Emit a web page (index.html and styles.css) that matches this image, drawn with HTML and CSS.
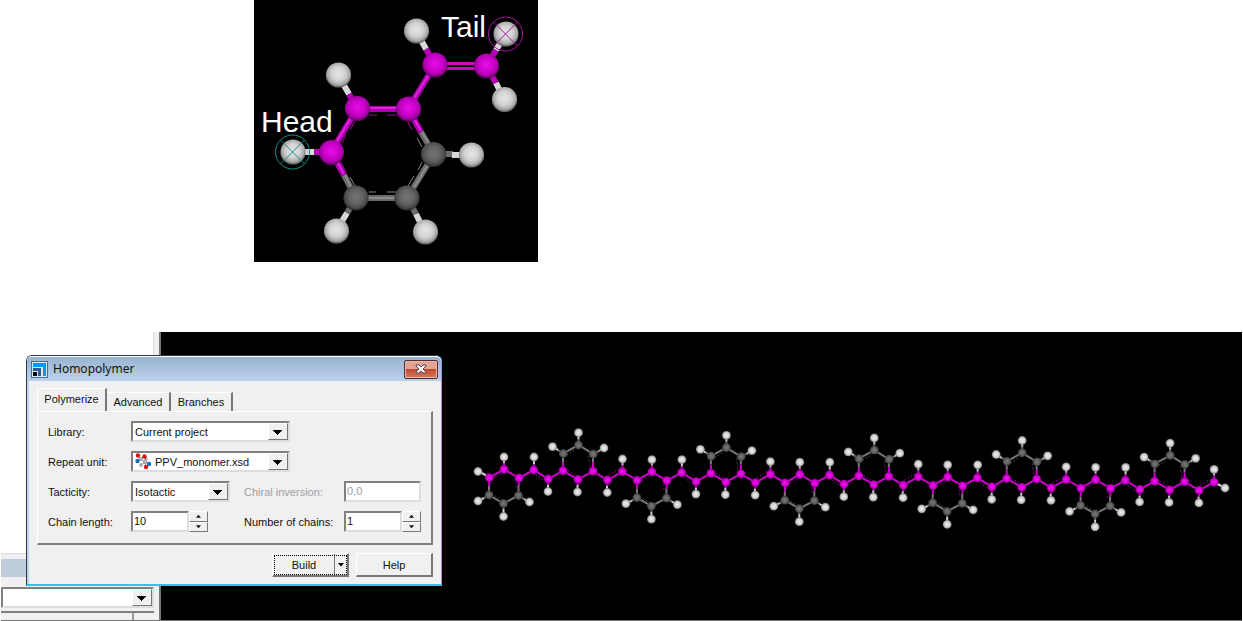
FILE: index.html
```html
<!DOCTYPE html>
<html lang="en">
<head>
<meta charset="utf-8">
<title>Homopolymer builder</title>
<link rel="stylesheet" href="styles.css">
</head>
<body>
<main class="page">
  <svg class="monomer" viewBox="0 0 284 262" width="284" height="262" role="img" aria-label="Monomer with head and tail atoms">
    <defs>
      <radialGradient id="gh" cx=".5" cy=".45" r=".55"><stop offset="0" stop-color="#e6e6e6"/><stop offset=".5" stop-color="#d2d2d2"/><stop offset=".8" stop-color="#a9a9a9"/><stop offset="1" stop-color="#555"/></radialGradient>
      <radialGradient id="gm" cx=".5" cy=".45" r=".55"><stop offset="0" stop-color="#e410e4"/><stop offset=".5" stop-color="#cf00cf"/><stop offset=".8" stop-color="#a600a6"/><stop offset="1" stop-color="#500050"/></radialGradient>
      <radialGradient id="gc" cx=".5" cy=".45" r=".55"><stop offset="0" stop-color="#747474"/><stop offset=".5" stop-color="#646464"/><stop offset=".8" stop-color="#4b4b4b"/><stop offset="1" stop-color="#222"/></radialGradient>
      <circle id="H" r="12.6" fill="url(#gh)"/>
      <circle id="M" r="12.6" fill="url(#gm)"/>
      <circle id="C" r="12.6" fill="url(#gc)"/>
    </defs>
    <rect width="284" height="262" fill="#000"/>
    <g fill="none" stroke-width="6">
      <g stroke="#b400b4"><path d="M77 152L103 109H154L181 65M154 109L167 132M77 152L90 175M60 152H77M95 94L103 109M172 49L181 65M232 66L242 50M232 66L242 83"/></g>
      <g stroke="#6b6b6b"><path d="M167 132L180 154L153 198H102L90 175M180 154H199M153 198L162 214M102 198L93 213"/></g>
      <g stroke="#d8d8d8"><path d="M39 152H60M84 75L95 94M162 31L172 49M252 34L242 50M250 99L242 83M218 155H198M171 232L162 214M82 231L93 213"/></g>
    </g>
    <g fill="none" stroke="#dd22dd" stroke-width="2"><path d="M78 149L102 110M105 108H153M156 105L180 66M156 111L167 131M79 154L90 174"/></g>
    <g fill="none" stroke="#8c8c8c" stroke-width="2"><path d="M168 132L180 153M178 158L154 197M104 198H152M91 175L101 196"/></g>
    <path d="M181 63.500H232M181 68.500H232" stroke="#d000d0" stroke-width="3"/>
    <path d="M115 115H123M133 115H142M88 143L92 135M96 130L101 121M154 122L158 130M87 162L91 170" stroke="#a400a4" fill="none"/>
    <path d="M163 138L168 147M168 162L164 170M160 176L154 186M96 177L101 186M115 192H122M133 192H142" stroke="#888" fill="none"/>
    <use href="#H" x="39" y="152"/><use href="#H" x="84.500" y="75"/><use href="#H" x="162.500" y="31"/><use href="#H" x="252" y="34"/><use href="#H" x="250.500" y="99.500"/><use href="#H" x="217.500" y="155"/><use href="#H" x="171.500" y="232"/><use href="#H" x="82.500" y="231"/>
    <use href="#M" x="77.500" y="152.500"/><use href="#M" x="103.500" y="108.500"/><use href="#M" x="154.500" y="109"/><use href="#M" x="181" y="65"/><use href="#M" x="232.500" y="66"/>
    <use href="#C" x="179.500" y="154.500"/><use href="#C" x="153" y="198"/><use href="#C" x="102" y="198"/>
    <g fill="none" stroke="#168d87"><circle cx="38.500" cy="152" r="17"/><path d="M26.500 140L50.500 164M50.500 140L26.500 164"/></g>
    <g fill="none" stroke="#a3129f"><circle cx="251.500" cy="34" r="17"/><path d="M239.500 22L263.500 46M263.500 22L239.500 46"/></g>
    <text class="tag" x="7" y="132">Head</text>
    <text class="tag" x="187" y="37">Tail</text>
  </svg>

  <section class="workspace">
    <aside class="side">
      <div class="side-list"></div>
      <div class="side-caption"></div>
      <div class="side-field"><span class="combo combo-side"><select aria-label="Property filter"><option></option></select></span></div>
      <div class="side-header"><span></span></div>
    </aside>
    <div class="viewport">
      <svg class="chain" viewBox="161 332 1081 288" role="img" aria-label="Polymer chain of ten repeat units">
        <defs>
          <radialGradient id="sh"><stop offset="0" stop-color="#eee"/><stop offset=".6" stop-color="#d4d4d4"/><stop offset="1" stop-color="#777"/></radialGradient>
          <radialGradient id="sm"><stop offset="0" stop-color="#ee18ee"/><stop offset=".6" stop-color="#d800d8"/><stop offset="1" stop-color="#8c008c"/></radialGradient>
          <radialGradient id="sc"><stop offset="0" stop-color="#777"/><stop offset=".6" stop-color="#626262"/><stop offset="1" stop-color="#333"/></radialGradient>
          <circle id="h" r="4.400" fill="url(#sh)"/>
          <circle id="m" r="4.400" fill="url(#sm)"/>
          <circle id="c" r="4.400" fill="url(#sc)"/>
          <g id="pair">
            <g fill="none" stroke-width="2">
              <path stroke="#ccc" d="M504 457V463M534 457V464M548 491V485M478 501L484 498M503.500 516V509M529 502L524 499M577.500 492V485M607 492V486M622.500 459V465M552.500 447L558 450M578.500 433V439M604 448L599 451"/>
              <path stroke="#777" d="M489 486V495L503.500 503.500L518.500 495.500V486M503.500 503V509M489 495L484 498M518.500 495.500L524 499M563 462V453.500L578.500 445L593 454V462M578.500 445V439M563 453.500L558 450M593 454L599 451"/>
              <path stroke="#ce00ce" d="M489.300 477.600L504 469.300L519 478L533.700 470L548.300 479L563 470.700L578 479.500L593 471.200L607.500 480L622.500 471.700M489.200 478V486M518.800 478V486M563 471V462M593 471V462M504 469V463M534 470V464M548 479V485M578 479V485M607.500 480V486M622.500 472V465"/>
              <path stroke="#a800a8" stroke-dasharray="1.500 2" stroke-width="1" d="M494 478L503 473M516 482V487M536 475L545 481M568 470.500L577 476M590 470V462M609 475L619 469"/>
              <path stroke="#555" stroke-dasharray="1.500 2" stroke-width="1" d="M492 494L502 500M567 455L576 449M589 461V455"/>
            </g>
            <use href="#h" x="504" y="457"/><use href="#h" x="534" y="457"/><use href="#h" x="548" y="491.500"/><use href="#h" x="478" y="501"/><use href="#h" x="503.500" y="516.500"/><use href="#h" x="529.500" y="502"/>
            <use href="#h" x="577.500" y="492"/><use href="#h" x="607.300" y="492.500"/><use href="#h" x="622.500" y="459"/><use href="#h" x="552.500" y="446.700"/><use href="#h" x="578.500" y="432.700"/><use href="#h" x="604" y="448"/>
            <use href="#c" x="489" y="495"/><use href="#c" x="503.500" y="503.500"/><use href="#c" x="518.500" y="495.500"/><use href="#c" x="563.300" y="453.500"/><use href="#c" x="578.500" y="445"/><use href="#c" x="593.300" y="454"/>
            <use href="#m" x="489.300" y="477.700"/><use href="#m" x="504" y="469.300"/><use href="#m" x="519" y="478"/><use href="#m" x="533.700" y="470"/><use href="#m" x="548.300" y="479"/><use href="#m" x="563" y="470.700"/><use href="#m" x="578" y="479.500"/><use href="#m" x="593" y="471.200"/><use href="#m" x="607.500" y="480"/><use href="#m" x="622.500" y="471.700"/>
          </g>
        </defs>
        <path fill="none" stroke="#ce00ce" stroke-width="2" d="M622.500 471.700L637.200 480.200M770.400 474.300L785.100 482.800M918.300 476.900L933 485.400M1066.200 479.500L1080.900 488"/>
        <path stroke="#ccc" stroke-width="2" d="M478 471L489 477M1214 482L1225 488"/>
        <use href="#pair"/><use href="#pair" x="147.900" y="2.600"/><use href="#pair" x="295.800" y="5.200"/><use href="#pair" x="443.700" y="7.800"/><use href="#pair" x="591.600" y="10.400"/>
        <use href="#h" x="478" y="471.500"/><use href="#h" x="1225" y="488"/>
      </svg>
    </div>

    <form class="dialog" aria-label="Homopolymer">
      <header class="titlebar">
        <svg width="17" height="17" viewBox="0 0 17 17" aria-hidden="true"><path fill="#496f99" d="M0 0H17V17H0z"/><path fill="#d9e8f5" d="M1 1H16V16H1z"/><path fill="#0997f4" d="M2 2H15V15H12V6H2z"/><path fill="#315e91" d="M2 7H10V15H7V10H2z"/><path d="M2 11H6V15H2z"/></svg>
        <h1>Homopolymer</h1>
        <button type="button" class="close" aria-label="Close"><svg width="12" height="10" viewBox="0 0 12 10"><path d="M1 1H4L6 3L8 1H11V2L8 5L11 8V9H8L6 7L4 9H1V8L4 5L1 2z" fill="#f4f4f4" stroke="#58484f"/></svg></button>
      </header>
      <nav class="tabs">
        <button type="button" class="tab active">Polymerize</button>
        <button type="button" class="tab">Advanced</button>
        <button type="button" class="tab">Branches</button>
      </nav>
      <div class="panel">
        <label for="library">Library:</label>
        <span class="combo wide"><select id="library"><option>Current project</option></select></span>
        <label for="unit">Repeat unit:</label>
        <span class="combo wide with-icon">
          <svg class="molecule" width="17" height="17" viewBox="0 0 17 17" aria-hidden="true"><path d="M3 2L6 6L2 8M6 6L10 9L14 11M10 9L11 14M9 3L6 6M10 9L6 12" stroke="#999" fill="none"/><g fill="#bbb" stroke="#777" stroke-width=".5"><circle cx="6" cy="6" r="1.600"/><circle cx="10" cy="9" r="1.600"/><circle cx="6" cy="12" r="1.500"/><circle cx="11" cy="6" r="1.400"/></g><g fill="#d41418"><circle cx="3" cy="2.500" r="2.200"/><circle cx="9.500" cy="3.500" r="2.200"/><circle cx="11" cy="14" r="2.200"/></g><g fill="#176bc0"><circle cx="2.500" cy="8" r="2.200"/><circle cx="14" cy="11" r="2.200"/></g></svg>
          <select id="unit"><option>PPV_monomer.xsd</option></select>
        </span>
        <label for="tacticity">Tacticity:</label>
        <span class="combo"><select id="tacticity"><option>Isotactic</option></select></span>
        <label for="inversion" class="off">Chiral inversion:</label>
        <input id="inversion" class="box off" value="0,0" disabled>
        <label for="length">Chain length:</label>
        <span class="spin"><input id="length" class="box" value="10"><span class="steps"><button type="button" class="up" aria-label="Increase chain length"></button><button type="button" class="down" aria-label="Decrease chain length"></button></span></span>
        <label for="chains">Number of chains:</label>
        <span class="spin"><input id="chains" class="box" value="1"><span class="steps"><button type="button" class="up" aria-label="Increase number of chains"></button><button type="button" class="down" aria-label="Decrease number of chains"></button></span></span>
      </div>
      <footer class="actions">
        <span class="split"><button type="button" class="build">Build</button><button type="button" class="more" aria-label="Build options"></button></span>
        <button type="button" class="help">Help</button>
      </footer>
    </form>
  </section>
</main>
</body>
</html>
```
FILE: styles.css
```css
* { box-sizing: border-box; }
body { margin: 0; background: #fff; color: #111; font: 11px/16px "Liberation Sans", Arial, sans-serif; }
button, input, select { font: inherit; color: inherit; margin: 0; padding: 0; border-radius: 0; }
.page { display: flex; flex-direction: column; gap: 70px; }
.monomer { display: block; margin-left: 254px; }
.tag { font: 30px "Liberation Sans", Arial, sans-serif; fill: #fff; }

.workspace { position: relative; display: flex; margin: 0 1px; border-bottom: 1px solid #777; }
.side { width: 160px; display: flex; flex-direction: column; background: #f0f0f0; border-right: 2px solid #777; padding-right: 5px; }
.side-list { flex: 1; background: #fff; border-right: 1px solid #ddd; border-bottom: 1px solid #ddd; }
.side-caption { height: 18px; margin: 5px 0 10px; background: #bfcddb; }
.side-field { height: 24px; }
.side-header { height: 9px; border-top: 2px solid #808080; display: flex; }
.side-header span { width: 133px; border-right: 2px solid #999; }
.combo-side { width: 100%; }
.viewport { flex: 1; min-width: 0; background: #000; }
.chain { display: block; width: 100%; height: auto; }

.dialog { position: absolute; left: 25px; top: 23px; width: 416px; background: #f0f0f0; border: 1px solid #303a44; border-right-color: #35c3df; border-bottom: 2px solid #35c3df; border-radius: 6px 6px 0 0; padding-bottom: 7px; box-shadow: inset 2px 0 #bcd3ea; }
.titlebar { height: 25px; display: flex; align-items: center; gap: 5px; padding: 0 3px 0 4px; border-top: 1px solid #fff; border-radius: 5px 5px 0 0; background: linear-gradient(#99b4d1, #bad1ea); }
.titlebar h1 { flex: 1; margin: 0; font: 12px/18px "Noto Sans", sans-serif; }
.close { width: 34px; height: 19px; display: grid; place-items: center; border: 1px solid #562c35; border-radius: 2px; background: linear-gradient(#e3a395 0 45%, #bf4930 50%, #d97c64); box-shadow: inset 0 0 0 1px #edb5aa; }

.tabs { display: flex; align-items: flex-end; height: 30px; padding-left: 10px; }
.tab { height: 19px; padding: 0 4px; background: #f0f0f0; border: 0; border-top: 1px solid #fff; border-right: 2px solid #777; white-space: nowrap; }
.tab.active { height: 23px; width: 70px; padding: 0 0 3px; border-left: 1px solid #fff; }
.tab:nth-child(2) { width: 64px; }
.tab:nth-child(3) { width: 62px; }
.panel { display: grid; grid-template-columns: 83px 99px 114px 77px; row-gap: 9px; align-items: center; margin: 0 8px 0 10px; padding: 9px 0 11px 10px; border: 1px solid #fff; border-right: 2px solid #808080; border-bottom: 2px solid #808080; }
.panel label { white-space: nowrap; }
.panel label[for="inversion"], .panel label[for="chains"] { padding-left: 14px; }
.panel .off { color: #a0a0a0; }
.wide { grid-column: 2 / 5; width: 159px; }
.combo { position: relative; display: flex; height: 21px; background: #fff; border: 2px solid; border-color: #808080 #ddd #ddd #808080; }
.combo select { flex: 1; width: 100%; border: 0; padding: 0 20px 0 2px; appearance: none; background: transparent; outline: 0; }
.combo::after { content: ""; position: absolute; right: 0; top: 0; bottom: 0; width: 18px; border: 1px solid; border-color: #fff #777 #777 #fff; background: linear-gradient(#000, #000) 4px 6px / 9px 1px no-repeat, linear-gradient(#000, #000) 5px 7px / 7px 1px no-repeat, linear-gradient(#000, #000) 6px 8px / 5px 1px no-repeat, linear-gradient(#000, #000) 7px 9px / 3px 1px no-repeat, linear-gradient(#000, #000) 8px 10px / 1px 1px no-repeat, #f0f0f0; pointer-events: none; }
.molecule { flex: none; margin-left: 2px; }
.with-icon select { padding-left: 3px; }
.box { width: 100%; height: 21px; min-width: 0; padding: 0 0 2px 1px; background: #fff; border: 2px solid; border-color: #808080 #ddd #ddd #808080; }
.spin { display: flex; width: 77px; }
.spin .box { flex: 1; }
.steps { display: flex; flex-direction: column; width: 19px; }
.steps button { display: grid; place-items: center; flex: 1; border: 1px solid; border-color: #fff #777 #777 #fff; background: #f0f0f0; }
.steps button::after { content: ""; width: 5px; height: 3px; background: #111; clip-path: polygon(50% 0, 100% 100%, 0 100%); }
.steps .down::after { clip-path: polygon(0 0, 100% 0, 50% 100%); }

.actions { display: flex; justify-content: flex-end; gap: 7px; padding: 8px 8px 0 0; }
.actions button { height: 24px; background: #f0f0f0; border: 1px solid; border-color: #fff #777 #777 #fff; }
.actions .help { width: 77px; border-right-width: 2px; border-bottom-width: 2px; }
.split { position: relative; display: flex; width: 77px; border: 1px solid; border-color: #fff #777 #777 #fff; }
.split::after { content: ""; position: absolute; inset: 1px; border: 1px dotted #000; pointer-events: none; }
.actions .split button { height: 22px; border-width: 0 1px 1px 0; }
.split .build { flex: 1; padding-left: 1px; }
.split .more { width: 13px; display: grid; place-items: center; }
.more::after { content: ""; width: 7px; height: 4px; background: #000; clip-path: polygon(0 0, 100% 0, 50% 100%); }
```
